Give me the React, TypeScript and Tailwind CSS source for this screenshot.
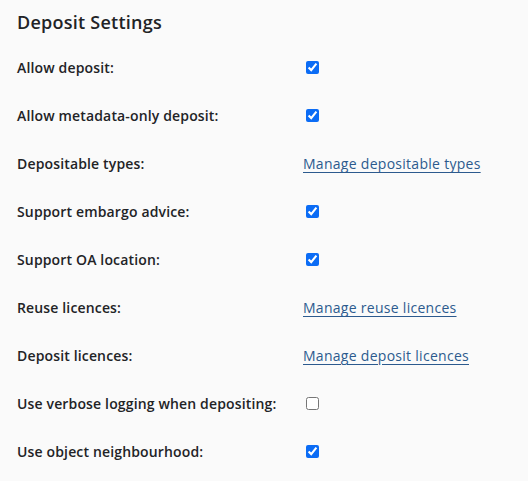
import React from "react";

type Row =
  | { label: string; kind: "check"; checked: boolean }
  | { label: string; kind: "link"; text: string };

const rows: Row[] = [
  { label: "Allow deposit:", kind: "check", checked: true },
  { label: "Allow metadata-only deposit:", kind: "check", checked: true },
  { label: "Depositable types:", kind: "link", text: "Manage depositable types" },
  { label: "Support embargo advice:", kind: "check", checked: true },
  { label: "Support OA location:", kind: "check", checked: true },
  { label: "Reuse licences:", kind: "link", text: "Manage reuse licences" },
  { label: "Deposit licences:", kind: "link", text: "Manage deposit licences" },
  { label: "Use verbose logging when depositing:", kind: "check", checked: false },
  { label: "Use object neighbourhood:", kind: "check", checked: true },
];

const App: React.FC = () => {
  return (
    <div
      className="min-h-[481px] w-[528px] bg-[#fafafa] pl-[17px] text-[#222326]"
      style={{ fontFamily: "'Open Sans', sans-serif" }}
    >
      <h2 className="flex h-[44px] items-center text-[18px] font-semibold tracking-[0.25px]">
        Deposit Settings
      </h2>
      <div className="grid grid-cols-[286px_1fr]">
        {rows.map((r) => (
          <React.Fragment key={r.label}>
            <div className="flex h-[47.9px] items-center text-[14px] font-semibold tracking-[0.15px]">
              {r.label}
            </div>
            <div className="flex h-[47.9px] items-center">
              {r.kind === "check" ? (
                <input
                  type="checkbox"
                  defaultChecked={r.checked}
                  className="ml-[3px] h-[13px] w-[13px] accent-[#0b6cf5]"
                />
              ) : (
                <a
                  href="#"
                  className="text-[14px] tracking-[0.28px] text-[#2c5a8e] underline underline-offset-[3px]"
                >
                  {r.text}
                </a>
              )}
            </div>
          </React.Fragment>
        ))}
      </div>
    </div>
  );
};

export default App;
